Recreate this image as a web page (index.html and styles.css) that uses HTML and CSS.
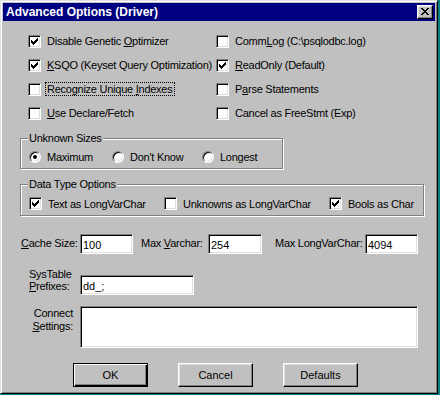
FILE: index.html
```html
<!DOCTYPE html>
<html lang="en">
<head>
    <meta charset="UTF-8">
    <title>Advanced Options (Driver)</title>
    <link rel="stylesheet" href="styles.css">
</head>
<body>

<!-- dialog window -->
<div class="window">
    <div class="titlebar">
        <span class="title">Advanced Options (Driver)</span>
        <span class="close">
            <svg width="8" height="7" viewBox="0 0 8 7"><path d="M0 0h2v1H0z M6 0h2v1H6z M1 1h2v1H1z M5 1h2v1H5z M2 2h4v1H2z M3 3h2v1H3z M2 4h4v1H2z M1 5h2v1H1z M5 5h2v1H5z M0 6h2v1H0z M6 6h2v1H6z"/></svg>
        </span>
    </div>

    <div class="content">
        <!-- driver flags -->
        <div class="options">
            <div class="check">
                <span class="box"><svg class="tick" viewBox="0 0 7 7"><path d="M6 0h1v1H6z M5 1h2v1H5z M0 2h1v1H0z M4 2h3v1H4z M0 3h2v1H0z M3 3h3v1H3z M0 4h5v1H0z M1 5h3v1H1z M2 6h1v1H2z"/></svg></span>
                <span class="text">Disable Genetic <u>O</u>ptimizer</span>
            </div>
            <div class="check">
                <span class="box"></span>
                <span class="text">Comm<u>L</u>og (C:\psqlodbc.log)</span>
            </div>
            <div class="check">
                <span class="box"><svg class="tick" viewBox="0 0 7 7"><path d="M6 0h1v1H6z M5 1h2v1H5z M0 2h1v1H0z M4 2h3v1H4z M0 3h2v1H0z M3 3h3v1H3z M0 4h5v1H0z M1 5h3v1H1z M2 6h1v1H2z"/></svg></span>
                <span class="text"><u>K</u>SQO (Keyset Query Optimization)</span>
            </div>
            <div class="check">
                <span class="box"><svg class="tick" viewBox="0 0 7 7"><path d="M6 0h1v1H6z M5 1h2v1H5z M0 2h1v1H0z M4 2h3v1H4z M0 3h2v1H0z M3 3h3v1H3z M0 4h5v1H0z M1 5h3v1H1z M2 6h1v1H2z"/></svg></span>
                <span class="text"><u>R</u>eadOnly (Default)</span>
            </div>
            <div class="check">
                <span class="box"></span>
                <span class="text focus">Recognize Unique <u>I</u>ndexes</span>
            </div>
            <div class="check">
                <span class="box"></span>
                <span class="text">P<u>a</u>rse Statements</span>
            </div>
            <div class="check">
                <span class="box"></span>
                <span class="text"><u>U</u>se Declare/Fetch</span>
            </div>
            <div class="check">
                <span class="box"></span>
                <span class="text">Cancel as FreeStmt (Exp)</span>
            </div>
        </div>

        <!-- unknown sizes -->
        <div class="group sizes">
            <span class="caption">Unknown Sizes</span>
            <div class="radio"><span class="dot on"></span><span class="text">Maximum</span></div>
            <div class="radio"><span class="dot"></span><span class="text">Don't Know</span></div>
            <div class="radio"><span class="dot"></span><span class="text">Longest</span></div>
        </div>

        <!-- data types -->
        <div class="group types">
            <span class="caption">Data Type Options</span>
            <div class="check">
                <span class="box"><svg class="tick" viewBox="0 0 7 7"><path d="M6 0h1v1H6z M5 1h2v1H5z M0 2h1v1H0z M4 2h3v1H4z M0 3h2v1H0z M3 3h3v1H3z M0 4h5v1H0z M1 5h3v1H1z M2 6h1v1H2z"/></svg></span>
                <span class="text">Text as LongVarChar</span>
            </div>
            <div class="check">
                <span class="box"></span>
                <span class="text">Unknowns as LongVarChar</span>
            </div>
            <div class="check">
                <span class="box"><svg class="tick" viewBox="0 0 7 7"><path d="M6 0h1v1H6z M5 1h2v1H5z M0 2h1v1H0z M4 2h3v1H4z M0 3h2v1H0z M3 3h3v1H3z M0 4h5v1H0z M1 5h3v1H1z M2 6h1v1H2z"/></svg></span>
                <span class="text">Bools as Char</span>
            </div>
        </div>

        <!-- sizes -->
        <div class="fields">
            <label class="lbl lbl-cache"><u>C</u>ache Size:</label>
            <input class="field" type="text" value="100">
            <label class="lbl lbl-varchar">Max <u>V</u>archar:</label>
            <input class="field" type="text" value="254">
            <label class="lbl lbl-long">Max LongVarChar:</label>
            <input class="field" type="text" value="4094">
        </div>

        <div class="prefix">
            <label class="lbl stack">SysTable<br><u>P</u>refixes:</label>
            <input class="field" type="text" value="dd_;">
        </div>

        <div class="connect">
            <label class="lbl stack right">Connect<br><u>S</u>ettings:</label>
            <textarea class="field area"></textarea>
        </div>

        <div class="buttons">
            <button class="btn default">OK</button>
            <button class="btn">Cancel</button>
            <button class="btn">Defaults</button>
        </div>
    </div>
</div>

</body>
</html>
```

FILE: styles.css
```css
* {
    box-sizing: border-box;
}
body {
    margin: 0;
    background-color: #008080;
    font-family: "Liberation Sans", Arial, sans-serif;
    font-size: 11px;
    letter-spacing: -0.25px;
    color: #000;
}
u {
    text-decoration: underline;
    text-underline-offset: 1px;
}

/* window frame */
.window {
    width: 438px;
    height: 394px;
    padding: 2px;
    background-color: #c0c0c0;
    border: 1px solid;
    border-color: #dfdfdf #000 #000 #dfdfdf;
    box-shadow: inset 1px 1px #fff, inset -1px -1px #808080;
}
.titlebar {
    height: 18px;
    background-color: #000080;
    display: flex;
    align-items: center;
    justify-content: space-between;
    padding: 0 2px 0 3px;
}
.title {
    color: #fff;
    font-weight: bold;
    font-size: 12px;
    letter-spacing: 0;
}
.close {
    width: 16px;
    height: 14px;
    display: flex;
    align-items: center;
    justify-content: center;
    background-color: #c0c0c0;
    border: 1px solid;
    border-color: #fff #000 #000 #fff;
    box-shadow: inset -1px -1px #808080, inset 1px 1px #dfdfdf;
    padding-bottom: 1px;
}

.content {
    padding-left: 17px;
}

/* check boxes */
.options {
    margin: 8px 0 0 8px;
    display: grid;
    grid-template-columns: 188px 1fr;
    grid-auto-rows: 24px;
}
.check, .radio {
    display: flex;
    align-items: center;
    white-space: nowrap;
}
.box {
    width: 13px;
    height: 13px;
    flex: none;
    background-color: #fff;
    border: 1px solid;
    border-color: #808080 #fff #fff #808080;
    box-shadow: inset 1px 1px #000, inset -1px -1px #dfdfdf;
    display: flex;
    align-items: center;
    justify-content: center;
}
.tick {
    width: 7px;
    height: 7px;
    shape-rendering: crispEdges;
}
.check .text {
    margin-left: 4px;
    padding: 0 1px;
    border: 1px solid transparent;
    line-height: 12px;
}
.check .text.focus {
    border: 1px dotted #000;
}

/* group boxes */
.group {
    position: relative;
    border: 1px solid #808080;
    box-shadow: inset 1px 1px #fff, 1px 1px #fff;
    display: grid;
}
.caption {
    position: absolute;
    top: -7px;
    left: 7px;
    padding: 0 1px;
    background-color: #c0c0c0;
    line-height: 12px;
}
.sizes {
    margin-top: 13px;
    width: 263px;
    height: 31px;
    padding: 11px 0 0 8px;
    grid-template-columns: 83px 90px 1fr;
    align-content: start;
}
.types {
    margin-top: 15px;
    width: 404px;
    height: 32px;
    padding: 12px 0 0 8px;
    grid-template-columns: 135px 165px 1fr;
    align-content: start;
}
.types .check, .sizes .radio {
    height: 13px;
}
.dot {
    width: 12px;
    height: 12px;
    flex: none;
    border-radius: 50%;
    background-color: #fff;
    border: 1px solid;
    border-color: #808080 #fff #fff #808080;
    box-shadow: inset 1px 1px #000, inset -1px -1px #dfdfdf;
    display: flex;
    align-items: center;
    justify-content: center;
}
.dot.on::after {
    content: "";
    width: 4px;
    height: 4px;
    border-radius: 50%;
    background-color: #000;
}
.radio .text {
    margin-left: 6px;
}

/* text fields */
.lbl {
    white-space: nowrap;
}
.field {
    height: 20px;
    padding: 2px 2px 0;
    font: inherit;
    background-color: #fff;
    border: 1px solid;
    border-color: #808080 #fff #fff #808080;
    box-shadow: inset 1px 1px #000, inset -1px -1px #dfdfdf;
    outline: none;
}
.fields {
    margin-top: 18px;
    display: grid;
    grid-template-columns: 60px 53px 75px 54px 103px 53px;
    align-items: start;
}
.fields .lbl {
    padding-top: 3px;
}
.lbl-cache {
    padding-left: 1px;
}
.lbl-varchar {
    padding-left: 8px;
}
.lbl-long {
    padding-left: 13px;
}
.prefix, .connect {
    display: grid;
    grid-template-columns: 60px auto;
}
.prefix {
    margin-top: 14px;
    align-items: end;
}
.prefix .field {
    width: 114px;
}
.stack {
    line-height: 12px;
    padding: 0 0 3px 9px;
}
.connect {
    margin-top: 11px;
    align-items: start;
}
.stack.right {
    text-align: right;
    padding: 1px 7px 0 0;
    line-height: 13px;
}
.area {
    width: 338px;
    height: 42px;
    resize: none;
}

/* push buttons */
.buttons {
    margin-top: 15px;
    padding-left: 53px;
    display: flex;
    gap: 30px;
}
.btn {
    width: 75px;
    height: 24px;
    padding: 0;
    font: inherit;
    color: #000;
    background-color: #c0c0c0;
    border: 1px solid;
    border-color: #fff #000 #000 #fff;
    box-shadow: inset -1px -1px #808080, inset 1px 1px #dfdfdf;
}
.btn.default {
    border-color: #000;
    box-shadow: inset 1px 1px #fff, inset -1px -1px #000, inset -2px -2px #808080;
}
```
